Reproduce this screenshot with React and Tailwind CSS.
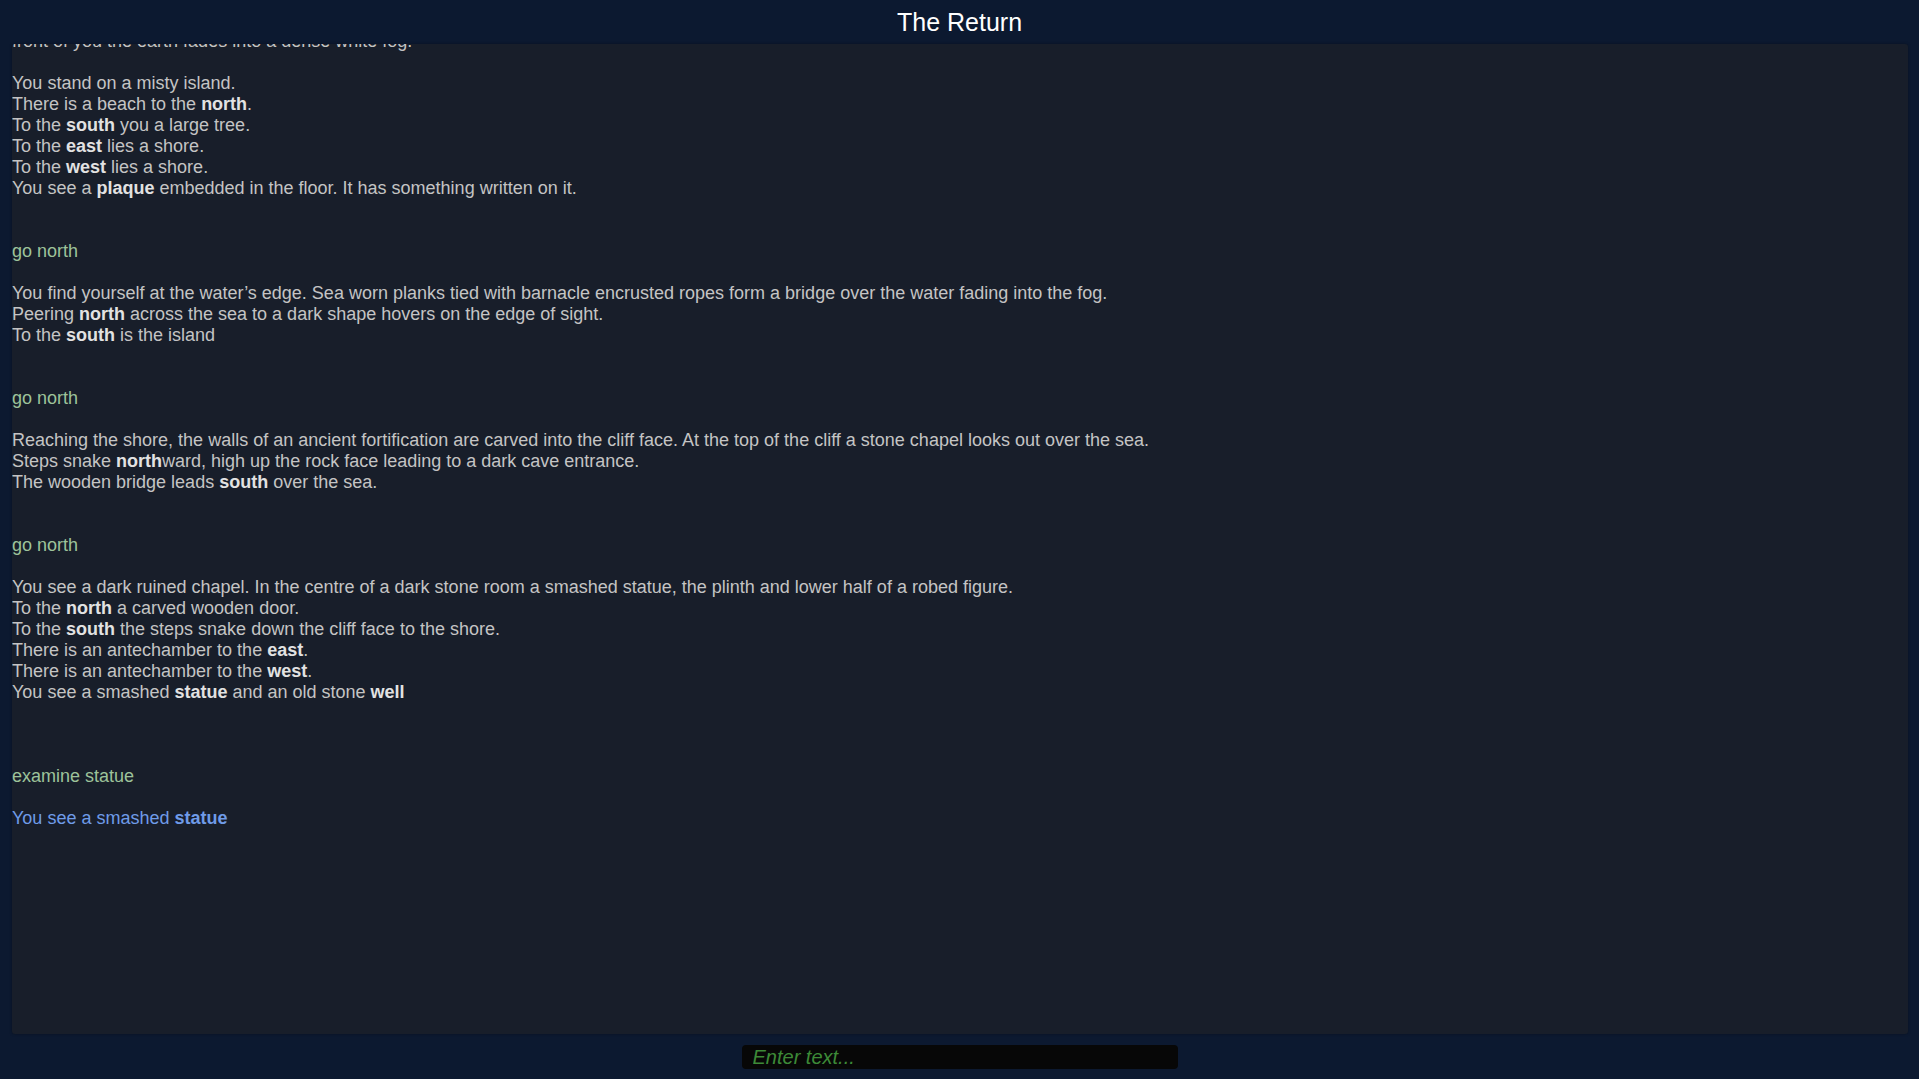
import React from 'react';

const B = ({ children }) => <b className="font-bold text-[#e2e2e2]">{children}</b>;

// one entry per 21px line; null = blank line
const log = [
  { t: 'text', c: <>front of you the earth fades into a dense white fog.</> },
  null,
  { t: 'text', c: <>You stand on a misty island.</> },
  { t: 'text', c: <>There is a beach to the <B>north</B>.</> },
  { t: 'text', c: <>To the <B>south</B> you a large tree.</> },
  { t: 'text', c: <>To the <B>east</B> lies a shore.</> },
  { t: 'text', c: <>To the <B>west</B> lies a shore.</> },
  { t: 'text', c: <>You see a <B>plaque</B> embedded in the floor. It has something written on it.</> },
  null,
  null,
  { t: 'cmd', c: 'go north' },
  null,
  { t: 'text', c: <>You find yourself at the water’s edge. Sea worn planks tied with barnacle encrusted ropes form a bridge over the water fading into the fog.</> },
  { t: 'text', c: <>Peering <B>north</B> across the sea to a dark shape hovers on the edge of sight.</> },
  { t: 'text', c: <>To the <B>south</B> is the island</> },
  null,
  null,
  { t: 'cmd', c: 'go north' },
  null,
  { t: 'text', c: <>Reaching the shore, the walls of an ancient fortification are carved into the cliff face. At the top of the cliff a stone chapel looks out over the sea.</> },
  { t: 'text', c: <>Steps snake <B>north</B>ward, high up the rock face leading to a dark cave entrance.</> },
  { t: 'text', c: <>The wooden bridge leads <B>south</B> over the sea.</> },
  null,
  null,
  { t: 'cmd', c: 'go north' },
  null,
  { t: 'text', c: <>You see a dark ruined chapel. In the centre of a dark stone room a smashed statue, the plinth and lower half of a robed figure.</> },
  { t: 'text', c: <>To the <B>north</B> a carved wooden door.</> },
  { t: 'text', c: <>To the <B>south</B> the steps snake down the cliff face to the shore.</> },
  { t: 'text', c: <>There is an antechamber to the <B>east</B>.</> },
  { t: 'text', c: <>There is an antechamber to the <B>west</B>.</> },
  { t: 'text', c: <>You see a smashed <B>statue</B> and an old stone <B>well</B></> },
  null,
  null,
  null,
  { t: 'cmd', c: 'examine statue' },
  null,
  { t: 'reply', c: <>You see a smashed <b className="font-bold">statue</b></> },
];

const lineColor = {
  text: 'text-[#c4c4c4]',
  cmd: 'text-[#9dc39a]',
  reply: 'text-[#6f9be8]',
};

export default function App() {
  return (
    <div className="h-[1079px] w-full flex flex-col bg-[#0c1930] font-['Liberation_Sans',Arial,sans-serif] overflow-hidden">
      <header className="h-[44px] shrink-0 flex justify-center pt-[8px]">
        <h1 className="text-[25px] leading-[29px] text-white">The Return</h1>
      </header>

      <main className="mx-[12px] mr-[11px] h-[990px] shrink-0 bg-[#181e2a] rounded-[3px] shadow-[0_0_3px_rgba(0,0,0,0.35)] overflow-hidden">
        <div className="-mt-[13px] text-[18px] leading-[21px] whitespace-nowrap">
          {log.map((line, i) =>
            line ? (
              <div key={i} className={lineColor[line.t]}>{line.c}</div>
            ) : (
              <div key={i} className="h-[21px]" />
            )
          )}
        </div>
      </main>

      <div className="flex-1 flex justify-center pt-[11px]">
        <input
          autoFocus
          type="text"
          placeholder="Enter text..."
          className="w-[436px] h-[24px] bg-[#070707] rounded-[4px] pl-[11px] pr-2 text-[20px] italic leading-[24px] text-[#4a9a44] placeholder:text-[#3d8a37] caret-[#4ade80] outline-none"
        />
      </div>
    </div>
  );
}
